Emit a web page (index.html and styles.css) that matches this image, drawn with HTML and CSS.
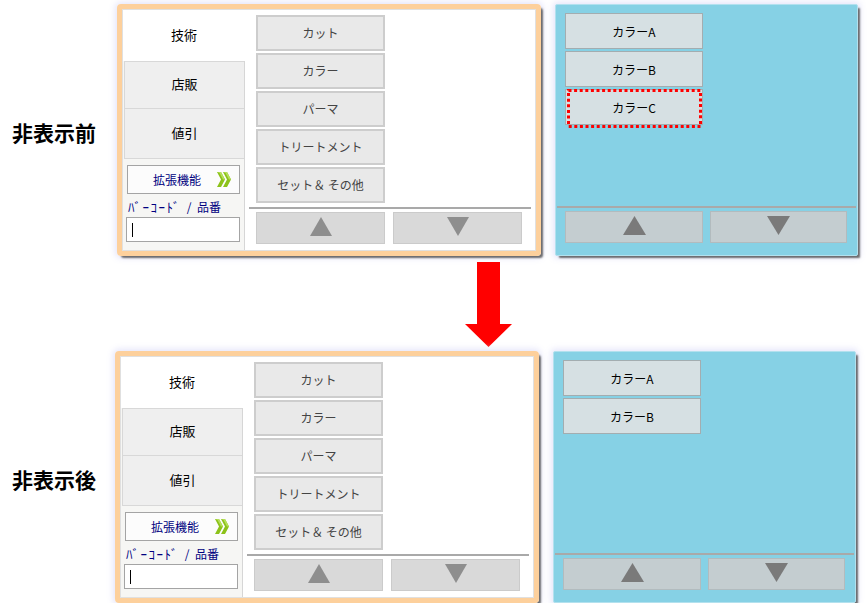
FILE: index.html
```html
<!DOCTYPE html>
<html lang="ja">
<head>
  <meta charset="UTF-8">
  <title>非表示前 / 非表示後</title>
  <link rel="stylesheet" href="styles.css">
</head>
<body>
  <div class="sheet">

    <div class="row">
      <div class="caption">非表示前</div>
      <div class="pos-panel">
        <div class="pos-inner">
          <div class="side">
            <div class="tab tab-active">技術</div>
            <div class="side-rest">
              <div class="tab">店販</div>
              <div class="tab tab-second">値引</div>
              <div class="ext-btn">
                <span>拡張機能</span>
                <svg width="14" height="15" viewBox="0 0 14 15"><polygon points="0,0 4,0 8,7.5 4,15 0,15 4,7.5" fill="#8cc21a"/><polygon points="6,0 10,0 14,7.5 10,15 6,15 10,7.5" fill="#8cc21a"/><polygon points="0,0 4,0 8,7.5 6,7.5 2.5,1" fill="#b6e05a"/><polygon points="6,0 10,0 14,7.5 12,7.5 8.5,1" fill="#b6e05a"/></svg>
              </div>
              <div class="code-label"><span class="kana">ﾊﾞｰｺｰﾄﾞ</span> / 品番</div>
              <div class="code-input"><span class="caret"></span></div>
            </div>
          </div>
          <div class="main">
            <div class="cat-list">
              <div class="cat-btn">カット</div>
              <div class="cat-btn">カラー</div>
              <div class="cat-btn">パーマ</div>
              <div class="cat-btn">トリートメント</div>
              <div class="cat-btn">セット＆ その他</div>
            </div>
            <div class="rule"></div>
            <div class="pager">
              <div class="page-btn"><svg width="22" height="19"><polygon points="11,0 22,19 0,19" fill="#8e8e8e"/></svg></div>
              <div class="page-btn"><svg width="22" height="19"><polygon points="0,0 22,0 11,19" fill="#8e8e8e"/></svg></div>
            </div>
          </div>
        </div>
      </div>
      <div class="sub-panel">
        <div class="sub-list">
          <div class="sub-btn">カラーA</div>
          <div class="sub-btn">カラーB</div>
          <div class="sub-btn">カラーC
            <svg class="mark" width="135" height="39"><rect x="1.5" y="1.5" width="132" height="36" fill="none" stroke="#f00" stroke-width="3" stroke-dasharray="3 2.6"/></svg>
          </div>
        </div>
        <div class="rule rule-sub"></div>
        <div class="pager pager-sub">
          <div class="page-btn page-btn-sub"><svg width="23" height="19"><polygon points="11.5,0 23,19 0,19" fill="#7a7a7a"/></svg></div>
          <div class="page-btn page-btn-sub"><svg width="23" height="19"><polygon points="0,0 23,0 11.5,19" fill="#7a7a7a"/></svg></div>
        </div>
      </div>
    </div>

    <div class="arrow">
      <svg width="47" height="85"><polygon points="12,0 35,0 35,62 47,62 23.5,85 0,62 12,62" fill="#ff0000"/></svg>
    </div>

    <div class="row row-after">
      <div class="caption">非表示後</div>
      <div class="pos-panel">
        <div class="pos-inner">
          <div class="side">
            <div class="tab tab-active">技術</div>
            <div class="side-rest">
              <div class="tab">店販</div>
              <div class="tab tab-second">値引</div>
              <div class="ext-btn">
                <span>拡張機能</span>
                <svg width="14" height="15" viewBox="0 0 14 15"><polygon points="0,0 4,0 8,7.5 4,15 0,15 4,7.5" fill="#8cc21a"/><polygon points="6,0 10,0 14,7.5 10,15 6,15 10,7.5" fill="#8cc21a"/><polygon points="0,0 4,0 8,7.5 6,7.5 2.5,1" fill="#b6e05a"/><polygon points="6,0 10,0 14,7.5 12,7.5 8.5,1" fill="#b6e05a"/></svg>
              </div>
              <div class="code-label"><span class="kana">ﾊﾞｰｺｰﾄﾞ</span> / 品番</div>
              <div class="code-input"><span class="caret"></span></div>
            </div>
          </div>
          <div class="main">
            <div class="cat-list">
              <div class="cat-btn">カット</div>
              <div class="cat-btn">カラー</div>
              <div class="cat-btn">パーマ</div>
              <div class="cat-btn">トリートメント</div>
              <div class="cat-btn">セット＆ その他</div>
            </div>
            <div class="rule"></div>
            <div class="pager">
              <div class="page-btn"><svg width="22" height="19"><polygon points="11,0 22,19 0,19" fill="#8e8e8e"/></svg></div>
              <div class="page-btn"><svg width="22" height="19"><polygon points="0,0 22,0 11,19" fill="#8e8e8e"/></svg></div>
            </div>
          </div>
        </div>
      </div>
      <div class="sub-panel">
        <div class="sub-list">
          <div class="sub-btn">カラーA</div>
          <div class="sub-btn">カラーB</div>
        </div>
        <div class="rule rule-sub"></div>
        <div class="pager pager-sub">
          <div class="page-btn page-btn-sub"><svg width="23" height="19"><polygon points="11.5,0 23,19 0,19" fill="#7a7a7a"/></svg></div>
          <div class="page-btn page-btn-sub"><svg width="23" height="19"><polygon points="0,0 23,0 11.5,19" fill="#7a7a7a"/></svg></div>
        </div>
      </div>
    </div>

  </div>
</body>
</html>
```

FILE: styles.css
```css
body {
  margin: 0;
  background: #fff;
  font-family: "Noto Sans CJK JP", "Noto Sans", sans-serif;
}
.sheet {
  padding-top: 4px;
}
.row {
  display: flex;
  align-items: center;
}
.caption {
  width: 117px;
  box-sizing: border-box;
  padding: 3px 0 0 12px;
  font-size: 21px;
  font-weight: bold;
  color: #000;
}
.row-after .caption {
  width: 115px;
}

/* left register panel */
.pos-panel {
  width: 424px;
  height: 252px;
  box-sizing: border-box;
  border: 5px solid #fdd09c;
  border-radius: 4px;
  margin-right: 14px;
  box-shadow: 3px 3px 2px -1px rgba(60, 60, 60, 0.75), 0 0 6px 2px rgba(226, 226, 250, 0.9);
}
.pos-inner {
  display: flex;
  height: 100%;
  box-sizing: border-box;
  background: #fff;
  border: 1px solid #e0e0e0;
}
.side {
  width: 122px;
  display: flex;
  flex-direction: column;
}
.tab {
  height: 48px;
  margin-left: 1px;
  box-sizing: border-box;
  padding-bottom: 3px;
  display: flex;
  align-items: center;
  justify-content: center;
  background: #efefef;
  border: 1px solid #d8d8d8;
  border-right: none;
  font-size: 13px;
  color: #000;
}
.tab-second {
  height: 50px;
  border-top: none;
}
.tab-active {
  height: 51px;
  margin-left: 0;
  background: #fff;
  border: none;
}
.side-rest {
  flex: 1;
  background: #f6f6f4;
  border-right: 1px solid #d6d6d6;
}
.ext-btn {
  height: 29px;
  margin: 6px 4px 0 4px;
  box-sizing: border-box;
  padding-left: 25px;
  display: flex;
  align-items: center;
  background: #fcfcfc;
  border: 1px solid #a4a4a4;
  font-size: 12px;
  color: #000080;
}
.ext-btn svg {
  margin-left: 16px;
}
.code-label {
  margin-top: 5px;
  padding-left: 5px;
  line-height: 16px;
  font-size: 12px;
  color: #000080;
  word-spacing: 3px;
}
.kana {
  font-size: 13px;
  letter-spacing: 1.5px;
}
.code-input {
  width: 114px;
  height: 25px;
  margin: 2px 0 0 3px;
  box-sizing: border-box;
  padding: 5px 0 0 5px;
  background: #fff;
  border: 1px solid #a4a4a4;
}
.caret {
  display: block;
  width: 1px;
  height: 14px;
  background: #000;
}
.main {
  flex: 1;
  display: flex;
  flex-direction: column;
}
.cat-list {
  height: 197px;
  box-sizing: border-box;
  padding: 5px 0 0 11px;
  display: flex;
  flex-direction: column;
  gap: 2px;
}
.cat-btn {
  width: 129px;
  height: 36px;
  box-sizing: border-box;
  padding-bottom: 2px;
  display: flex;
  align-items: center;
  justify-content: center;
  background: #e9e9e9;
  border: 2px solid #cdcdcd;
  font-size: 12px;
  color: #444;
}
.rule {
  height: 2px;
  margin: 0 4px;
  background: #a9a9a9;
}
.pager {
  display: flex;
  gap: 8px;
  padding: 3px 12px 0 11px;
}
.page-btn {
  width: 129px;
  height: 32px;
  box-sizing: border-box;
  padding-bottom: 3px;
  display: flex;
  align-items: center;
  justify-content: center;
  background: #d9d9d9;
  border: 1px solid #cbcbcb;
}

/* right sub-menu panel */
.sub-panel {
  width: 303px;
  height: 252px;
  box-sizing: border-box;
  display: flex;
  flex-direction: column;
  background: #86d1e5;
  border: 1px solid #b3e1ee;
  border-radius: 2px;
  box-shadow: 3px 3px 2px -1px rgba(60, 60, 60, 0.75), 0 0 6px 2px rgba(226, 226, 250, 0.9);
}
.sub-list {
  height: 201px;
  box-sizing: border-box;
  padding: 8px 0 0 9px;
  display: flex;
  flex-direction: column;
  gap: 2px;
}
.sub-btn {
  position: relative;
  width: 138px;
  height: 36px;
  box-sizing: border-box;
  display: flex;
  align-items: center;
  justify-content: center;
  background: #d6e0e3;
  border: 1px solid #a3adb0;
  font-size: 12px;
  color: #000;
}
.mark {
  position: absolute;
  left: 1px;
  top: -1px;
}
.rule-sub {
  margin: 0 1px;
}
.pager-sub {
  gap: 7px;
  padding: 3px 10px 0 9px;
}
.page-btn-sub {
  width: 138px;
  background: #c4cdd0;
  border-color: #b2bbbe;
}
.page-btn-sub + .page-btn-sub {
  width: 137px;
}

.arrow {
  height: 85px;
  margin: 6px 0 4px 465px;
}
.arrow svg {
  display: block;
}
```
